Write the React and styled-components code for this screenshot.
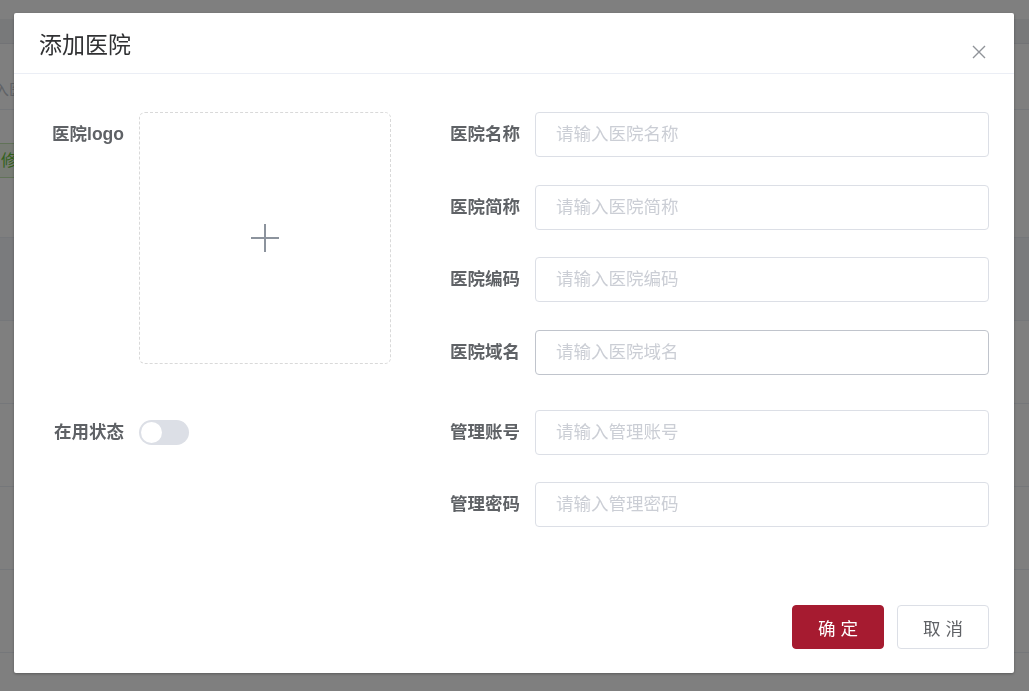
import React from "react";
import styled, { createGlobalStyle } from "styled-components";

const GlobalStyle = createGlobalStyle`
  html, body {
    margin: 0;
    padding: 0;
    background: #ffffff;
  }
  body {
    font-family: "Liberation Sans", "Noto Sans CJK SC", sans-serif;
    color: #606266;
    overflow: hidden;
  }
  * { box-sizing: border-box; }
`;

/* ---------- page behind the dialog ---------- */

const Page = styled.div`
  height: 100vh;
  overflow: hidden;
  display: flex;
  flex-direction: column;
  padding-top: 19px;
`;

const TabBar = styled.div`
  height: 25px;
  background: #f0f2f5;
  border-bottom: 1px solid #e4e7ed;
  flex: none;
`;

const SearchBar = styled.div`
  height: 66px;
  display: flex;
  align-items: center;
  padding-top: 28px;
  border-bottom: 1px solid #ebeef5;
  flex: none;
`;

const SearchInput = styled.div`
  margin-left: -48px;
  width: 200px;
  height: 34px;
  font-size: 15px;
  line-height: 32px;
  padding-left: 12px;
  color: #c0c4cc;
  white-space: nowrap;
`;

const ActionBar = styled.div`
  height: 128px;
  padding-top: 33px;
  flex: none;
  border-bottom: 1px solid #ebeef5;
`;

const PlainGreenButton = styled.div`
  margin-left: -14px;
  width: 90px;
  height: 35px;
  border: 1px solid #c2e7b0;
  background: #f0f9eb;
  color: #67c23a;
  border-radius: 4px;
  font-size: 16px;
  line-height: 33px;
  padding-left: 14px;
`;

const TableRow = styled.div`
  height: 83px;
  flex: none;
  border-bottom: 1px solid #ebeef5;
  background: ${(p) => (p.$hover ? "#f5f7fa" : "#ffffff")};
  display: grid;
  grid-template-columns: 64px 634px 190px 1fr;
  align-items: end;
  font-size: 15px;
  color: #303133;
`;

const Cell = styled.div`
  line-height: 1;
`;

/* ---------- dialog ---------- */

const Overlay = styled.div`
  position: fixed;
  inset: 0;
  background: rgba(0, 0, 0, 0.5);
  display: flex;
  justify-content: center;
  align-items: flex-start;
  padding: 13px 15px 0 14px;
`;

const Dialog = styled.div`
  width: 1000px;
  flex: none;
  background: #ffffff;
  border-radius: 2px;
  box-shadow: 0 1px 3px rgba(0, 0, 0, 0.3);
  display: flex;
  flex-direction: column;
`;

const Header = styled.div`
  height: 61px;
  padding: 0 25px;
  border-bottom: 1px solid #ebeef5;
  display: flex;
  align-items: center;
  justify-content: space-between;
`;

const Title = styled.span`
  font-family: "Noto Sans CJK SC", sans-serif;
  font-size: 23px;
  color: #303133;
  line-height: 30px;
`;

const CloseButton = styled.button`
  border: none;
  background: transparent;
  padding: 0;
  width: 14px;
  height: 14px;
  margin-top: 17px;
  margin-right: 3px;
  color: #909399;
  display: flex;
  cursor: pointer;
`;

const Body = styled.div`
  padding: 38px 25px 0;
  display: flex;
  flex-direction: column;
  gap: 35px;
`;

const FormRow = styled.div`
  display: flex;
  align-items: flex-start;
`;

const LeftCell = styled.div`
  width: 381px;
  flex: none;
  display: flex;
  align-items: flex-start;
  gap: 15px;
`;

const RightCell = styled.div`
  flex: 1;
  display: flex;
  flex-direction: column;
  gap: 27.5px;
`;

const Field = styled.div`
  display: flex;
  align-items: center;
  gap: 15px;
`;

const Label = styled.label`
  width: ${(p) => p.$width}px;
  flex: none;
  text-align: right;
  font-size: 17.5px;
  font-weight: bold;
  line-height: 45px;
  color: #5f6266;
  white-space: nowrap;
`;

const TextInput = styled.input`
  flex: 1;
  height: 45px;
  border: 1px solid ${(p) => (p.$hover ? "#c0c4cc" : "#dcdfe6")};
  border-radius: 4px;
  padding: 0 20px;
  font-family: "Liberation Sans", "Noto Sans CJK SC", sans-serif;
  font-size: 17.5px;
  color: #606266;
  outline: none;
  &::placeholder {
    color: #cbced5;
  }
`;

const Upload = styled.div`
  width: 252px;
  height: 252px;
  border: 1px dashed #d9d9d9;
  border-radius: 6px;
  display: flex;
  align-items: center;
  justify-content: center;
  color: #8c939d;
  cursor: pointer;
`;

const SwitchWrap = styled.div`
  height: 45px;
  display: flex;
  align-items: center;
`;

const SwitchTrack = styled.span`
  width: 50px;
  height: 25px;
  border-radius: 13px;
  background: ${(p) => (p.$on ? "#a61b30" : "#dcdfe6")};
  padding: 2px;
  display: flex;
  justify-content: ${(p) => (p.$on ? "flex-end" : "flex-start")};
`;

const SwitchKnob = styled.span`
  width: 21px;
  height: 21px;
  border-radius: 50%;
  background: #ffffff;
`;

const Footer = styled.div`
  padding: 78px 25px 24px;
  display: flex;
  justify-content: flex-end;
  gap: 13px;
`;

const Button = styled.button`
  width: 92px;
  height: 44px;
  border-radius: 4px;
  font-family: "Liberation Sans", "Noto Sans CJK SC", sans-serif;
  font-size: 17.5px;
  cursor: pointer;
  border: 1px solid ${(p) => (p.$primary ? "#a61b30" : "#dcdfe6")};
  background: ${(p) => (p.$primary ? "#a61b30" : "#ffffff")};
  color: ${(p) => (p.$primary ? "#ffffff" : "#606266")};
`;

const PlusIcon = () => (
  <svg width="28" height="28" viewBox="0 0 28 28" fill="none">
    <path d="M14 0v28M0 14h28" stroke="currentColor" strokeWidth="2" />
  </svg>
);

const CloseIcon = () => (
  <svg width="14" height="14" viewBox="0 0 14 14" fill="none">
    <path d="M1 1l12 12M13 1L1 13" stroke="currentColor" strokeWidth="1.4" />
  </svg>
);

const topFields = [
  ["医院名称", "请输入医院名称"],
  ["医院简称", "请输入医院简称"],
  ["医院编码", "请输入医院编码"],
  ["医院域名", "请输入医院域名", true],
];

const bottomFields = [
  ["管理账号", "请输入管理账号"],
  ["管理密码", "请输入管理密码"],
];

function FieldList({ items }) {
  return (
    <RightCell>
      {items.map(([label, placeholder, hover]) => (
        <Field key={label}>
          <Label $width={100}>{label}</Label>
          <TextInput placeholder={placeholder} $hover={hover} />
        </Field>
      ))}
    </RightCell>
  );
}

export default function App() {
  return (
    <>
      <GlobalStyle />
      <Page>
        <TabBar />
        <SearchBar>
          <SearchInput>请输入医院名称</SearchInput>
        </SearchBar>
        <ActionBar>
          <PlainGreenButton>修改</PlainGreenButton>
        </ActionBar>
        <TableRow $hover />
        <TableRow />
        <TableRow />
        <TableRow />
        <TableRow />
        <TableRow>
          <Cell />
          <Cell>000</Cell>
          <Cell>000</Cell>
          <Cell>000</Cell>
        </TableRow>
      </Page>

      <Overlay>
        <Dialog>
          <Header>
            <Title>添加医院</Title>
            <CloseButton aria-label="关闭">
              <CloseIcon />
            </CloseButton>
          </Header>
          <Body>
            <FormRow>
              <LeftCell>
                <Label $width={85}>医院logo</Label>
                <Upload>
                  <PlusIcon />
                </Upload>
              </LeftCell>
              <FieldList items={topFields} />
            </FormRow>
            <FormRow>
              <LeftCell>
                <Label $width={85}>在用状态</Label>
                <SwitchWrap>
                  <SwitchTrack>
                    <SwitchKnob />
                  </SwitchTrack>
                </SwitchWrap>
              </LeftCell>
              <FieldList items={bottomFields} />
            </FormRow>
          </Body>
          <Footer>
            <Button $primary>确 定</Button>
            <Button>取 消</Button>
          </Footer>
        </Dialog>
      </Overlay>
    </>
  );
}
